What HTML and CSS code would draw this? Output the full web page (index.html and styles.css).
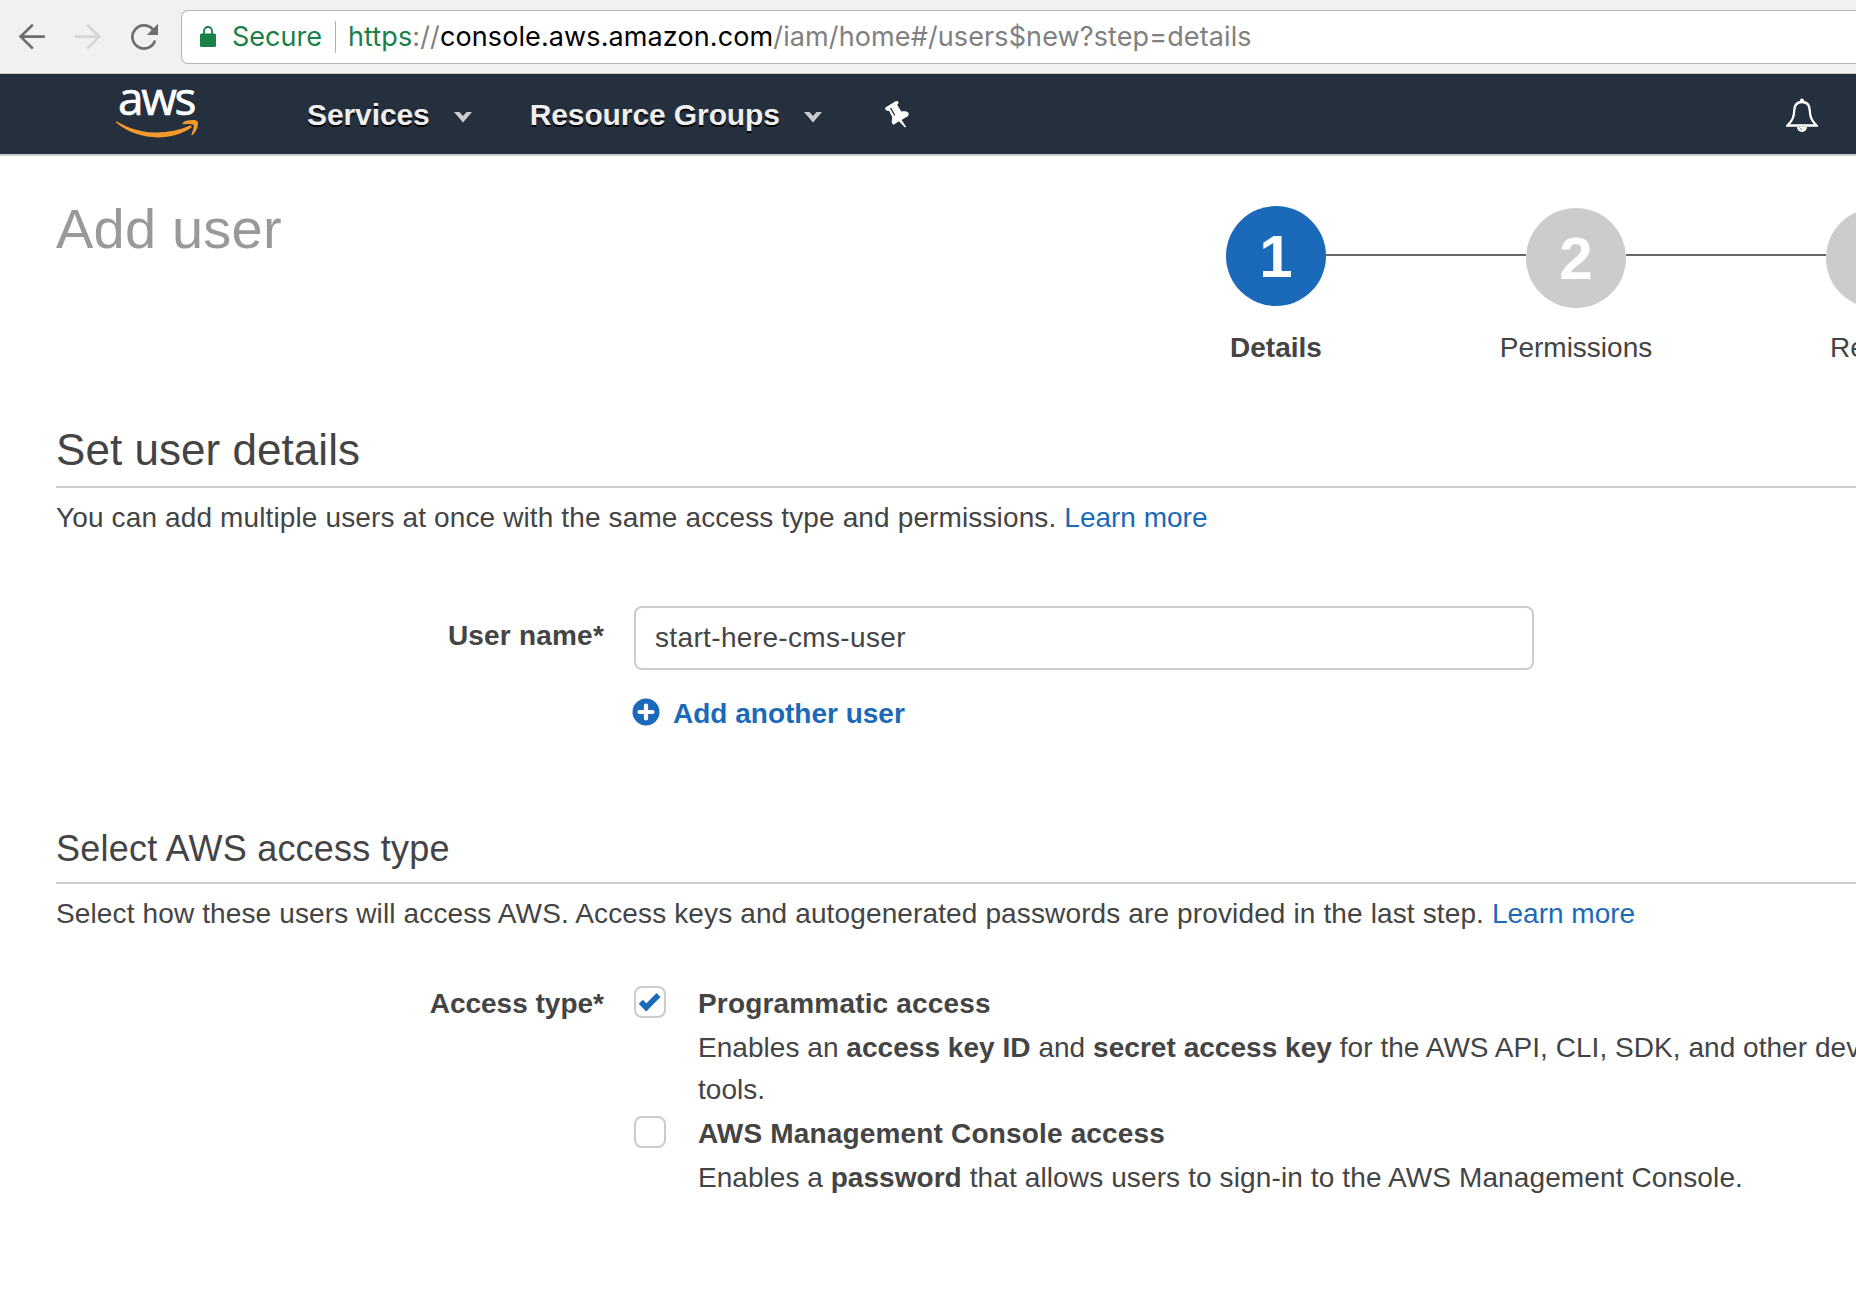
FILE: index.html
```html
<!DOCTYPE html>
<html lang="en">
<head>
<meta charset="utf-8">
<title>Add user</title>
<link rel="stylesheet" href="styles.css">
</head>
<body>
<header class="browser">
  <svg class="tool" viewBox="0 0 28 28"><path d="M14 2.500 2.600 13.600 14 24.700M3 13.600h23" fill="none" stroke="#6e6e6e" stroke-width="2.700" stroke-linecap="round"/></svg>
  <svg class="tool" viewBox="0 0 28 28"><path d="M14 2.500l11.400 11.100L14 24.700M25 13.600H2" fill="none" stroke="#d6d6d6" stroke-width="2.700" stroke-linecap="round"/></svg>
  <svg class="tool" viewBox="0 0 28 28"><path d="M24.600 18.600A11.600 11.600 0 1 1 22.500 6" fill="none" stroke="#6e6e6e" stroke-width="2.700" stroke-linecap="round"/><path d="M28 .7V12H16.800z" fill="#6e6e6e"/></svg>
  <div class="omnibox">
    <svg class="lock" viewBox="0 0 16 21"><path d="M4 9V5a4 4 0 0 1 8 0v4" fill="none" stroke="#188048" stroke-width="1.800"/><rect y="7.500" width="16" height="13.500" rx="1.500" fill="#188048"/></svg>
    <span class="secure">Secure</span>
    <span class="url"><span class="scheme">https</span>://<span class="host">console.aws.amazon.com</span>/iam/home#/users$new?step=details</span>
  </div>
</header>
<nav class="nav">
  <div class="logo">
    <span class="logo-text">aws</span>
    <svg class="smile" viewBox="0 0 82 18"><path d="M1 1.400C22 14.500 50 16 73.500 5.800c1.800-.8 3 1 1.300 2.200C55 21.500 22 21 .4 2.800-.3 2 0 1 1 1.400z" fill="#f79a2e"/><path d="M67 2.500c4-2.700 11.500-3 14.300-1.500 1.800 2.500 0 9.500-4.500 13.800-.8.700-1.700.3-1.300-.7 1.200-2.800 3-7.500 2-9-1-1.400-6-1.300-9.700-.8-1.200.1-1.800-1-.8-1.800z" fill="#f79a2e"/></svg>
  </div>
  <a class="menu">Services<svg class="caret" viewBox="0 0 18 11"><path d="M0 0h5.500L9 4l3.500-4H18L9 10.500z" fill="#ccc"/></svg></a>
  <a class="menu">Resource Groups<svg class="caret" viewBox="0 0 18 11"><path d="M0 0h5.500L9 4l3.500-4H18L9 10.500z" fill="#ccc"/></svg></a>
  <svg class="pin" viewBox="0 0 26 28"><path d="M1.500 7.500 11.500 1.300c2-.8 3.200.2 3 2l-1.300 1.400 4 6.800c2.800-.6 5.500-.5 7.400 1.300.3 1.500 0 2.700-1.200 3.700L17.500 20l4.700 6.800-1.200.7-6-6.300-5.500 3.600c-1.800-1-2.300-3.500-1.200-7.500L5 10.700c-2 .3-3.300-.5-3.900-1.700z" fill="#fff"/><path d="m6.500 8 4.300 7.500" fill="none" stroke="#25303f" stroke-width="1.300"/></svg>
  <svg class="bell" viewBox="0 0 32 34"><path d="M16 4C10.500 4 8.500 8 8.300 12 8 18.500 7 22 1.500 27.500h29C25 22 24 18.500 23.700 12 23.500 8 21.500 4 16 4z" fill="none" stroke="#fff" stroke-width="2.300"/><circle cx="16" cy="2.500" r="2" fill="#fff"/><path d="M11 29h10a5 5 0 0 1-10 0z" fill="#fff"/><path d="m13.500 29.500 2.500 2.500" stroke="#7c838c" stroke-width="1"/></svg>
</nav>
<main class="page">
  <div class="top">
    <h1 class="title">Add user</h1>
    <ol class="steps">
      <li class="step current"><span class="dot">1</span><span class="name">Details</span></li>
      <li class="step"><span class="dot">2</span><span class="name">Permissions</span></li>
      <li class="step"><span class="dot">3</span><span class="name">Review</span></li>
    </ol>
  </div>

  <section>
    <h2 class="heading">Set user details</h2>
    <p class="intro">You can add multiple users at once with the same access type and permissions. <a class="link">Learn more</a></p>
    <div class="form user-form">
      <label class="label user-label" for="user-name">User name*</label>
      <div class="field">
        <input class="input" id="user-name" type="text" value="start-here-cms-user">
        <a class="add"><svg class="plus" viewBox="0 0 28 28"><circle cx="14" cy="14" r="13.500" fill="#1b69b9"/><path d="M14 7.500v13M7.500 14h13" stroke="#fff" stroke-width="4.200" stroke-linecap="round"/></svg>Add another user</a>
      </div>
    </div>
  </section>

  <section class="access">
    <h3 class="heading heading-small">Select AWS access type</h3>
    <p class="intro">Select how these users will access AWS. Access keys and autogenerated passwords are provided in the last step. <a class="link">Learn more</a></p>
    <div class="form access-form">
      <span class="label access-label">Access type*</span>
      <div class="options">
        <div class="option">
          <span class="box"><svg class="tick" viewBox="0 0 24 20"><path d="m2.800 9.800 5.400 5.700L20.500 3" fill="none" stroke="#1b69b9" stroke-width="5.600"/></svg></span>
          <div class="text">
            <strong class="option-title">Programmatic access</strong>
            <p class="desc">Enables an <b>access key ID</b> and <b>secret access key</b> for the AWS API, CLI, SDK, and other development<br>tools.</p>
          </div>
        </div>
        <div class="option">
          <span class="box"></span>
          <div class="text">
            <strong class="option-title">AWS Management Console access</strong>
            <p class="desc">Enables a <b>password</b><span class="tail"> that allows users to sign-in to the AWS Management Console.</span></p>
          </div>
        </div>
      </div>
    </div>
  </section>
</main>
</body>
</html>
```
FILE: styles.css
```css
* {
  box-sizing: border-box;
  margin: 0;
  padding: 0;
}

body {
  overflow: hidden;
  width: 1856px;
  height: 1294px;
  background: #fff;
  color: #444;
  font: 28px/40px "Liberation Sans", Arial, sans-serif;
  white-space: nowrap;
}

svg {
  display: block;
  flex: none;
}

/* Browser toolbar */
.browser {
  display: flex;
  align-items: center;
  gap: 28px;
  height: 74px;
  padding-left: 18px;
  background: #f1f1f1;
  border-bottom: 1px solid #ccc;
}

.tool {
  width: 28px;
  height: 28px;
}

.omnibox {
  display: flex;
  flex: 1;
  align-items: center;
  height: 54px;
  margin-left: -5px;
  padding-left: 18px;
  background: #fff;
  border: 1px solid #b5b5b5;
  border-right: 0;
  border-radius: 7px 0 0 7px;
  color: #808080;
  font: 27px/32px Inter, "Liberation Sans", sans-serif;
}

.lock {
  width: 16px;
  height: 21px;
}

.secure {
  width: 120px;
  padding-left: 16px;
  border-right: 1px solid #b0b0b0;
  color: #188048;
}

.url {
  padding: 1px 0 0 12px;
  letter-spacing: 0.11px;
}

.scheme {
  color: #188048;
}

.host {
  color: #000;
}

/* Console navigation */
.nav {
  display: flex;
  align-items: center;
  height: 82px;
  padding: 0 38px 0 116px;
  background: #25303f;
  border-bottom: 2px solid #ccc;
}

.logo {
  width: 82px;
  height: 80px;
  margin-right: 109px;
  padding-top: 3px;
}

.logo-text {
  display: block;
  height: 43px;
  padding-left: 2px;
  color: #fff;
  font: 400 46px/40px "Open Sans", sans-serif;
  letter-spacing: -2.3px;
  -webkit-text-stroke: 0.7px #fff;
}

.smile {
  width: 82px;
  height: 18px;
}

.menu {
  display: flex;
  align-items: center;
  gap: 24px;
  margin-right: 58px;
  padding-top: 2px;
  color: #eee;
  font-size: 30px;
  font-weight: bold;
  letter-spacing: -0.1px;
  line-height: 78px;
  text-shadow: 0 2px 0 #000;
}

.caret {
  width: 18px;
  height: 11px;
  margin-top: 4px;
}

.pin {
  width: 26px;
  height: 28px;
  margin-left: 4px;
}

.bell {
  width: 32px;
  height: 34px;
  margin-top: 2px;
  margin-left: auto;
}

/* Page header and wizard steps */
.page {
  padding-left: 56px;
}

.top {
  display: flex;
  height: 264px;
}

.title {
  flex: none;
  width: 1070px;
  padding-top: 41px;
  color: #999;
  font-size: 56px;
  font-weight: normal;
  letter-spacing: 0.2px;
  line-height: 64px;
}

.steps {
  display: flex;
  padding-top: 50px;
  list-style: none;
}

.step {
  position: relative;
  display: flex;
  flex: none;
  flex-direction: column;
  align-items: center;
  width: 300px;
  padding-top: 2px;
}

.step::after {
  position: absolute;
  top: 48px;
  left: 200px;
  width: 200px;
  height: 2px;
  background: #666;
  content: "";
}

.step:last-child::after {
  display: none;
}

.dot {
  width: 100px;
  height: 100px;
  margin-bottom: 20px;
  border-radius: 50%;
  background: #ccc;
  color: #fff;
  font-size: 60px;
  font-weight: bold;
  line-height: 102px;
  text-align: center;
}

.current {
  padding-top: 0;
}

.current .dot {
  margin-bottom: 22px;
  background: #1b69b9;
}

.current .name {
  font-weight: bold;
}

/* Sections */
.heading {
  height: 68px;
  border-bottom: 2px solid #ccc;
  font-size: 44px;
  font-weight: normal;
  letter-spacing: 0.05px;
  line-height: 60px;
}

.heading-small {
  height: 60px;
  font-size: 36px;
  letter-spacing: 0.22px;
  line-height: 50px;
}

.access {
  margin-top: 90px;
}

.intro {
  margin-top: 10px;
  letter-spacing: 0.13px;
}

.link {
  color: #1b69b9;
  letter-spacing: 0;
}

.form {
  display: grid;
  grid-template-columns: 548px 900px;
  column-gap: 30px;
}

.user-form {
  margin-top: 68px;
}

.access-form {
  margin-top: 48px;
}

.label {
  font-weight: bold;
  text-align: right;
}

.user-label {
  letter-spacing: 0.2px;
  line-height: 60px;
}

.access-label {
  padding-top: 1px;
  line-height: 42px;
}

.input {
  display: block;
  width: 900px;
  height: 64px;
  padding: 0 19px;
  background: #fff;
  border: 2px solid #ccc;
  border-radius: 8px;
  color: #444;
  font: inherit;
  letter-spacing: 0.35px;
}

.add {
  display: flex;
  gap: 13px;
  margin: 24px 0 0 -2px;
  color: #1b69b9;
  font-weight: bold;
}

.plus {
  width: 28px;
  height: 28px;
  margin-top: 4px;
}

.option {
  display: flex;
  gap: 32px;
  margin-bottom: 1px;
}

.box {
  flex: none;
  width: 32px;
  height: 32px;
  margin-top: 4px;
  padding: 4px 0 0 2px;
  border: 2px solid #ccc;
  border-radius: 8px;
}

.tick {
  width: 24px;
  height: 20px;
}

.option-title {
  display: block;
  height: 45px;
  letter-spacing: 0.17px;
  line-height: 44px;
}

.desc {
  letter-spacing: 0.04px;
  line-height: 42px;
}

.tail {
  letter-spacing: 0.12px;
}
```
